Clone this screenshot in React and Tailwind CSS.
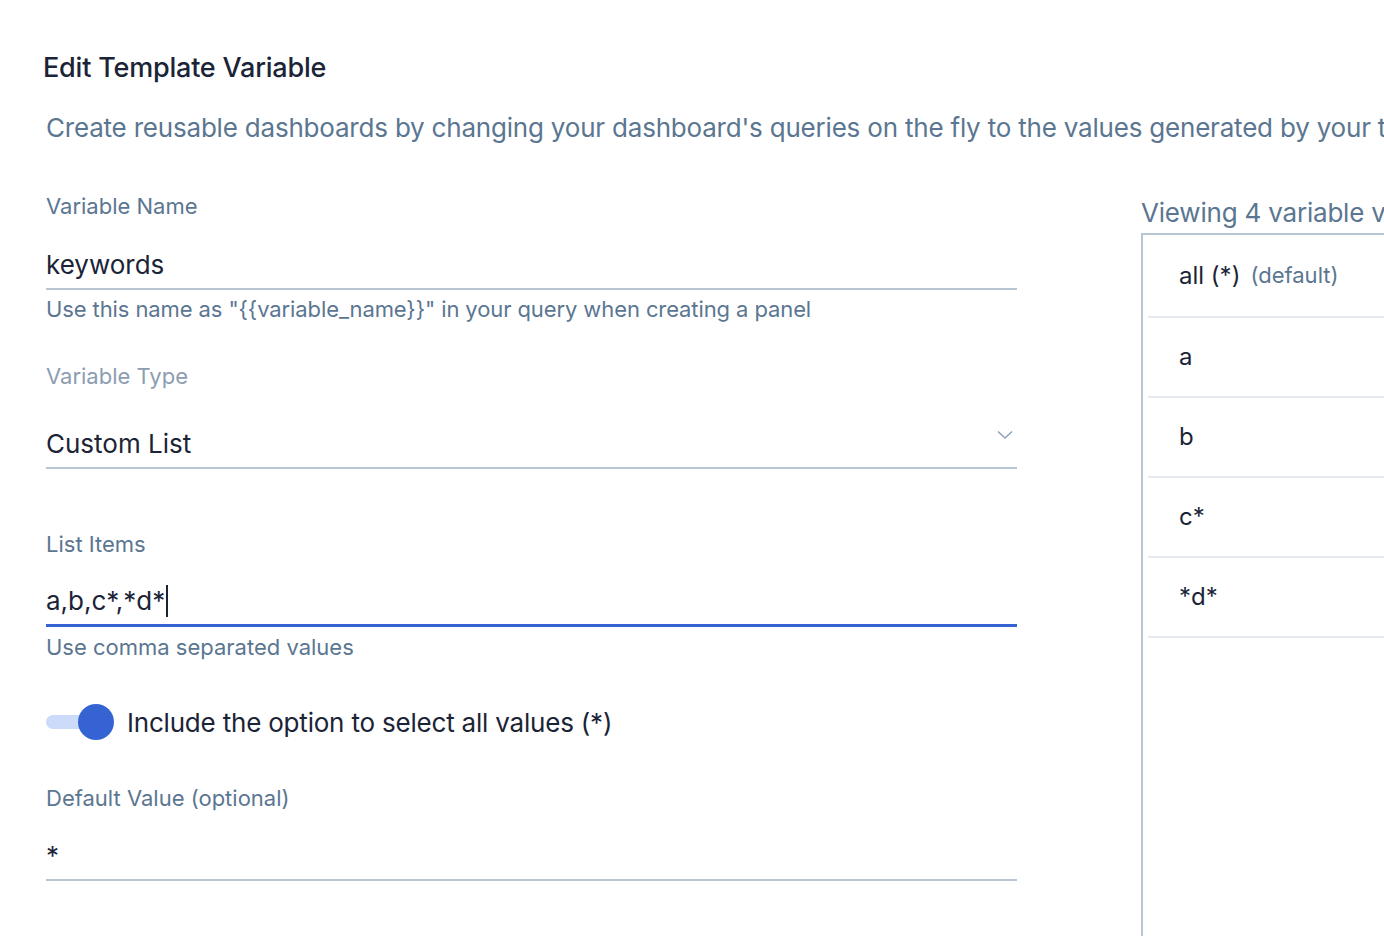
export default function App() {
  const values = ["a", "b", "c*", "*d*"];

  return (
    <div
      className="w-[1384px] h-[936px] overflow-hidden bg-white text-[#1b2436]"
      style={{ fontFamily: "Inter, 'Noto Sans', sans-serif" }}
    >
      {/* Header */}
      <div className="pt-[52px] pl-[43px] whitespace-nowrap">
        <h1 className="h-[32px] flex items-center text-[27px] font-medium tracking-[-0.2px]">Edit Template Variable</h1>
        <p className="mt-[27px] ml-[3px] h-[32px] flex items-center text-[26px] text-[#5b7691] tracking-[-0.2px]">
          Create reusable dashboards by changing your dashboard's queries on the fly to the values generated by your template variable
        </p>
      </div>

      <div className="flex mt-[51px]">
        {/* Form */}
        <div className="ml-[46px] w-[971px] shrink-0">
          <div className="h-[24px] flex items-center text-[22px] text-[#5b7691]">Variable Name</div>
          <div className="mt-[22px] h-[50px] flex items-center border-b-2 border-[#b8c5d3] text-[26px]">keywords</div>
          <div className="mt-[7px] h-[24px] flex items-center text-[22px] text-[#5b7691] tracking-[-0.1px]">
            Use this name as "{"{{variable_name}}"}" in your query when creating a panel
          </div>

          <div className="mt-[43px] h-[24px] flex items-center text-[22px] text-[#8d9db1]">Variable Type</div>
          <div className="mt-[32px] h-[49px] flex items-center justify-between border-b-2 border-[#b8c5d3] text-[26px]">
            <span>Custom List</span>
            <svg width="16" height="10" viewBox="0 0 16 10" className="mr-[4px] mb-[18px]">
              <path d="M1 1.5 L8 8 L15 1.5" fill="none" stroke="#8ea0b5" strokeWidth="1.5" />
            </svg>
          </div>

          <div className="mt-[63px] h-[24px] flex items-center text-[22px] text-[#5b7691]">List Items</div>
          <div className="mt-[21px] h-[50px] flex items-center border-b-[3px] border-[#3563d4] text-[26px]">
            <span>a,b,c*,*d*</span>
            <span className="ml-[1px] w-[2px] h-[32px] bg-[#1b2436]" />
          </div>
          <div className="mt-[8px] h-[24px] flex items-center text-[22px] text-[#5b7691]">Use comma separated values</div>

          <div className="mt-[43px] h-[40px] flex items-center">
            <div className="relative w-[68px] h-[36px] flex items-center">
              <div className="w-[54px] h-[14px] rounded-full bg-[#cddbfa]" />
              <div className="absolute left-[32px] top-0 w-[36px] h-[36px] rounded-full bg-[#3563d4]" />
            </div>
            <span className="ml-[13px] text-[26px] tracking-[-0.2px]">Include the option to select all values (*)</span>
          </div>

          <div className="mt-[44px] h-[24px] flex items-center text-[22px] text-[#5b7691]">Default Value (optional)</div>
          <div className="mt-[22px] h-[49px] flex items-center border-b-2 border-[#b8c5d3] text-[26px]">*</div>
        </div>

        {/* Preview */}
        <div className="ml-[124px] flex-1 min-w-[600px] whitespace-nowrap">
          <div className="mt-[2px] h-[32px] flex items-center text-[26px] text-[#5b7691] tracking-[-0.2px]">Viewing 4 variable values</div>
          <div className="mt-[5px] h-[800px] border-t-2 border-l-2 border-[#b8c5d3]">
            <div className="ml-[5px]">
              <div className="h-[83px] flex items-center pl-[31px] border-b-2 border-[#e6ebf1]">
                <span className="text-[24px]">all (*)</span>
                <span className="ml-[10px] text-[22px] text-[#5b7691]">(default)</span>
              </div>
              {values.map((v) => (
                <div key={v} className="h-[80px] flex items-center pl-[31px] border-b-2 border-[#e6ebf1] text-[24px]">
                  {v}
                </div>
              ))}
            </div>
          </div>
        </div>
      </div>
    </div>
  );
}
